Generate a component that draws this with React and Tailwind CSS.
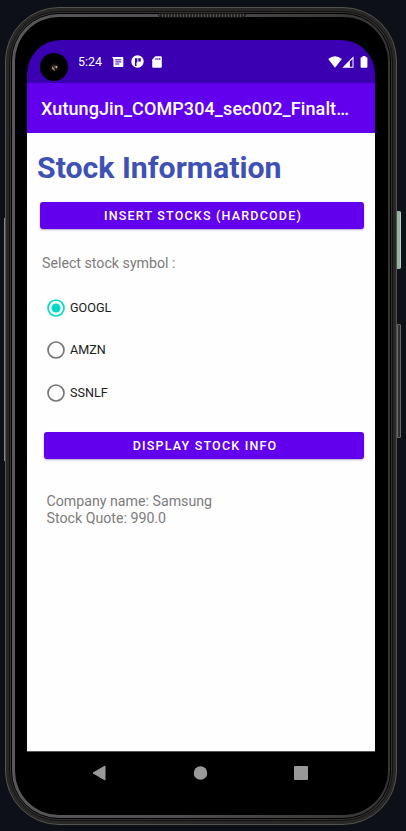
import { useState } from 'react';

function StatusBar() {
  return (
    <div className="flex h-[43px] shrink-0 items-center rounded-t-[34px] bg-[#3a00b2] pl-[13px] pr-[7px] text-white">
      <div className="flex size-7 -mt-px translate-y-[6px] items-center justify-center rounded-full bg-black">
        <svg viewBox="0 0 28 28" className="size-7">
          <circle cx="14.5" cy="14.5" r="4" fill="#17110f" />
          <path d="M12 13l2 2 1 3-3-2z" fill="#ad8068" />
          <path d="M15 13h2.5l-1 3z" fill="#d1a88b" />
          <path d="M14 12l1 4" stroke="#49618d" strokeWidth="0.8" />
        </svg>
      </div>
      <span className="ml-[10px] w-[25px] whitespace-nowrap text-[12.4px] leading-4">5:24</span>
      <svg viewBox="0 0 12 10" className="ml-[9px] h-[10px] w-3" fill="white">
        <path d="M0 0h10.5q.8 0 .8.8v8.4q0 .8-.8.8H2.2q-.8 0-.8-.8V2z" />
        <path d="M3.3 2.8h6M3.3 4.9h6M3.3 7h4" stroke="#3a00b2" strokeWidth="1" />
      </svg>
      <svg viewBox="0 0 13 13" className="ml-[7px] size-[13px]">
        <circle cx="6.5" cy="6.5" r="6.2" fill="white" />
        <path d="M4 3.2h2.4v4.1H5.5v3.8H4zM7.3 3.2h2.5v3.4H7.3z" fill="#3a00b2" />
      </svg>
      <svg viewBox="0 0 10 12" className="ml-2 h-[12px] w-[10px]">
        <path d="M3.3.3h5.5q1 0 1 1v9.4q0 1-1 1H1.2q-1 0-1-1V3.5z" fill="white" />
        <path d="M4 2v2M5.9 2v2M7.8 2v2" stroke="#3a00b2" strokeWidth="0.9" />
      </svg>
      <svg viewBox="0 0 14 12" className="ml-auto h-3 w-[14px]" fill="white">
        <path d="M.2 3Q7-2.4 13.8 3L7 11.8z" />
      </svg>
      <svg viewBox="0 0 12 12" className="h-3 w-3" fill="white">
        <path fillRule="evenodd" d="M11.5.3v11.4H.3zM10.5 2.9L7.9 5.5v5.3h2.6z" />
      </svg>
      <svg viewBox="0 0 8 12" className="ml-[6px] h-3 w-2" fill="white">
        <path d="M2.5 0h3v1.2h1.1q.8 0 .8.8v9q0 .8-.8.8H1.4q-.8 0-.8-.8V2q0-.8.8-.8h1.1z" />
      </svg>
    </div>
  );
}

function RadioRow({ label, checked, onSelect }) {
  return (
    <button
      type="button"
      role="radio"
      aria-checked={checked}
      onClick={onSelect}
      className="flex h-[42.5px] items-center text-[12.6px] text-[#202020]"
    >
      <svg viewBox="0 0 18 18" className="mr-[5px] size-[18px]" fill="none">
        <circle cx="9" cy="9" r="8" strokeWidth="1.7" stroke={checked ? '#03dac5' : '#767676'} />
        {checked && <circle cx="9" cy="9" r="4.5" fill="#03dac5" />}
      </svg>
      <span className="pt-px">{label}</span>
    </button>
  );
}

function ActionButton({ children, className }) {
  return (
    <button
      type="button"
      className={`flex h-[27px] items-center justify-center rounded-[3px] bg-[#6200ee] pl-[2px] pt-[2px] text-[12.5px] font-medium text-white shadow-[0_1px_2px_rgba(40,0,100,0.35)] ${className}`}
    >
      {children}
    </button>
  );
}

function Screen() {
  const [symbol, setSymbol] = useState('GOOGL');
  return (
    <div className="flex h-[711px] w-[348px] flex-col">
      <StatusBar />
      <header className="flex h-[50px] shrink-0 items-center bg-[#6200ee] pl-[14px] text-[18px] font-medium tracking-[0.1px] text-white">
        <span className="whitespace-nowrap pt-px">XutungJin_COMP304_sec002_Finalt…</span>
      </header>
      <main className="flex flex-1 flex-col bg-[#fefefe]">
        <h1 className="ml-[10px] mt-[17px] whitespace-nowrap text-[30.25px] font-bold leading-9 text-[#3f51b5]">
          Stock Information
        </h1>
        <ActionButton className="ml-[13px] mr-[11px] mt-4 tracking-[1.2px]">INSERT STOCKS (HARDCODE)</ActionButton>
        <p className="ml-[15px] mt-[26px] text-[14.2px] leading-[17px] text-[#7c7c7c]">Select stock symbol :</p>
        <div role="radiogroup" className="ml-5 mt-[14.5px] flex flex-col items-start">
          {['GOOGL', 'AMZN', 'SSNLF'].map((name) => (
            <RadioRow key={name} label={name} checked={symbol === name} onSelect={() => setSymbol(name)} />
          ))}
        </div>
        <ActionButton className="ml-[17px] mr-[11px] mt-[18px] tracking-[1.2px]">DISPLAY STOCK INFO</ActionButton>
        <p className="ml-[19.5px] mt-[34px] text-[14.2px] leading-[17px] text-[#7c7c7c]">
          Company name: Samsung
          <br />
          Stock Quote: 990.0
        </p>
      </main>
    </div>
  );
}

function NavigationBar() {
  return (
    <nav className="flex h-[42px] w-[348px] items-center justify-between border-t border-[#555] pl-[65px] pr-[67px]">
      <svg viewBox="0 0 14 16" className="h-4 w-[14px]">
        <path d="M13 1v14L1 8z" fill="#999" stroke="#999" strokeLinejoin="round" />
      </svg>
      <svg viewBox="0 0 14 14" className="size-[14px] translate-x-[0.5px]">
        <circle cx="7" cy="7" r="6.8" fill="#999" />
      </svg>
      <span className="size-[14px] rounded-[1px] bg-[#999]" />
    </nav>
  );
}

export default function App() {
  return (
    <div className="relative h-[831px] w-[406px] overflow-hidden bg-[#0d1117] pl-[5px] pt-[7px] font-[Roboto,sans-serif]">
      <span className="absolute left-[397px] top-[211px] h-[58px] w-1 rounded-r-[2px] border-r border-[#b4d0c2] bg-[#8db5a1]" />
      <span className="absolute left-[397px] top-[324px] h-[114px] w-1 rounded-r-[1px] border border-[#666] bg-[#303030]" />
      <span className="absolute left-[4px] top-[218px] h-[243px] w-px bg-[#858585]" />
      <div className="h-[818px] w-[392px] rounded-[54px] border border-[#55524f] bg-[#292827] p-[3px]">
        <div className="h-full rounded-[50px] border border-[#111] bg-[#333231] p-px">
          <div className="h-full rounded-[48px] border border-black bg-[linear-gradient(90deg,#58585b_0%,#505052_40%,#343434_100%)] pb-[3px] pl-[3px] pr-[2px] pt-[3px]">
            <div className="flex h-full flex-col rounded-[44px] bg-black pl-[12px] pt-[23px]">
              <Screen />
              <NavigationBar />
            </div>
          </div>
        </div>
      </div>
      <span className="absolute left-[158px] top-[13px] h-[5px] w-[88px] rounded-b-[4px] border border-[#111] bg-[repeating-linear-gradient(90deg,#555_0_1px,#262626_1px_3px)]" />
    </div>
  );
}
